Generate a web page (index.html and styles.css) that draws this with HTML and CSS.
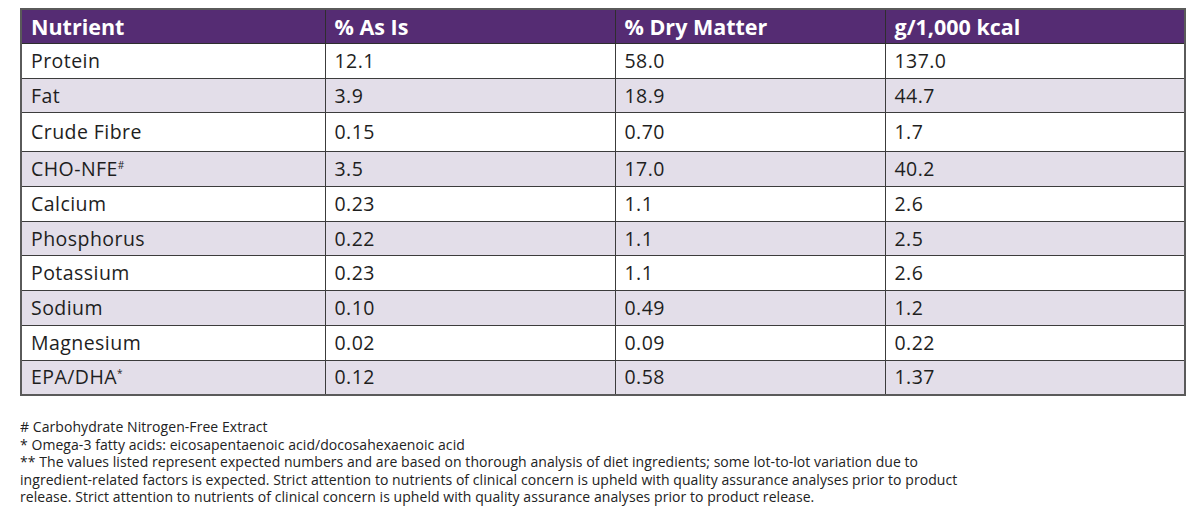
FILE: index.html
```html
<!DOCTYPE html>
<html lang="en">
<head>
<meta charset="utf-8">
<title>Nutrient table</title>
<link rel="stylesheet" href="styles.css">
</head>
<body>
<table class="nutrients">
  <colgroup>
    <col class="c1"><col class="c2"><col class="c3"><col class="c4">
  </colgroup>
  <thead>
    <tr><th>Nutrient</th><th>% As Is</th><th>% Dry Matter</th><th>g/1,000 kcal</th></tr>
  </thead>
  <tbody>
    <tr><td>Protein</td><td>12.1</td><td>58.0</td><td>137.0</td></tr>
    <tr><td>Fat</td><td>3.9</td><td>18.9</td><td>44.7</td></tr>
    <tr class="tall"><td>Crude Fibre</td><td>0.15</td><td>0.70</td><td>1.7</td></tr>
    <tr><td>CHO-NFE<sup>#</sup></td><td>3.5</td><td>17.0</td><td>40.2</td></tr>
    <tr><td>Calcium</td><td>0.23</td><td>1.1</td><td>2.6</td></tr>
    <tr><td>Phosphorus</td><td>0.22</td><td>1.1</td><td>2.5</td></tr>
    <tr><td>Potassium</td><td>0.23</td><td>1.1</td><td>2.6</td></tr>
    <tr><td>Sodium</td><td>0.10</td><td>0.49</td><td>1.2</td></tr>
    <tr><td>Magnesium</td><td>0.02</td><td>0.09</td><td>0.22</td></tr>
    <tr><td>EPA/DHA<sup>*</sup></td><td>0.12</td><td>0.58</td><td>1.37</td></tr>
  </tbody>
</table>
<div class="notes">
  <p># Carbohydrate Nitrogen-Free Extract</p>
  <p>* Omega-3 fatty acids: eicosapentaenoic acid/docosahexaenoic acid</p>
  <p>** The values listed represent expected numbers and are based on thorough analysis of diet ingredients; some lot-to-lot variation due to<br>ingredient-related factors is expected. Strict attention to nutrients of clinical concern is upheld with quality assurance analyses prior to product<br>release. Strict attention to nutrients of clinical concern is upheld with quality assurance analyses prior to product release.</p>
</div>
</body>
</html>
```
FILE: styles.css
```css
html, body {
  background: #ffffff;
}
body {
  margin: 8px 0 0 20px;
  font-family: "Open Sans", "Liberation Sans", sans-serif;
  color: #1e1e1e;
}
.nutrients {
  width: 1164px;
  border-collapse: collapse;
  table-layout: fixed;
  border: 2px solid #5a5a5a;
}
.c1 { width: 304px; }
.c2 { width: 290px; }
.c3 { width: 270px; }
.c4 { width: 300px; }
.nutrients th {
  background: #552c73;
  color: #ffffff;
  font-weight: 700;
  font-size: 21.5px;
  line-height: 26px;
  text-align: left;
  height: 33px;
  padding: 0 9px;
  border: 1px solid #2e2e2e;
}
.nutrients td {
  font-size: 19.5px;
  line-height: 24px;
  height: 33.7px;
  padding: 0 9px;
  border: 1px solid #3c3c3c;
  letter-spacing: 0.45px;
}
.nutrients tbody tr:nth-child(even) td {
  background: #e3dee9;
}
.nutrients tr.tall td {
  height: 38px;
}
.nutrients sup {
  font-size: 10px;
  line-height: 0;
  vertical-align: 7px;
}
.notes {
  margin-top: 22px;
  font-size: 14px;
  line-height: 17.5px;
  letter-spacing: 0.06px;
  color: #222222;
}
.notes p {
  margin: 0;
}
```
